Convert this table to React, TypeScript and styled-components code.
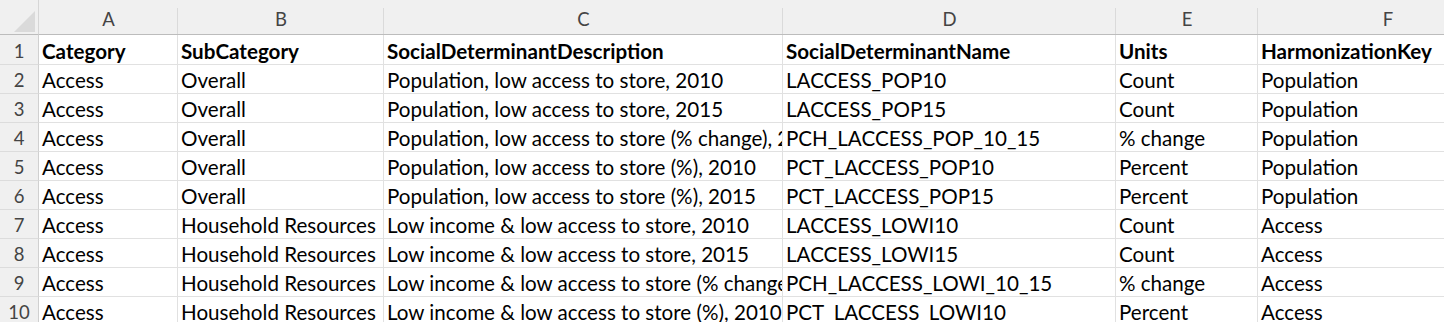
import React from "react";
import styled, { createGlobalStyle } from "styled-components";

const GlobalStyle = createGlobalStyle`
  html, body {
    margin: 0;
    padding: 0;
    background: #ffffff;
    overflow: hidden;
  }
  body {
    font-family: Lato, "Open Sans", sans-serif;
  }
`;

const COLUMNS = [
  { letter: "A", width: 139 },
  { letter: "B", width: 206 },
  { letter: "C", width: 399 },
  { letter: "D", width: 333 },
  { letter: "E", width: 142 },
  { letter: "F", width: 260 },
];

const ROWS: string[][] = [
  [
    "Category",
    "SubCategory",
    "SocialDeterminantDescription",
    "SocialDeterminantName",
    "Units",
    "HarmonizationKey",
  ],
  ["Access", "Overall", "Population, low access to store, 2010", "LACCESS_POP10", "Count", "Population"],
  ["Access", "Overall", "Population, low access to store, 2015", "LACCESS_POP15", "Count", "Population"],
  [
    "Access",
    "Overall",
    "Population, low access to store (% change), 2010-15",
    "PCH_LACCESS_POP_10_15",
    "% change",
    "Population",
  ],
  ["Access", "Overall", "Population, low access to store (%), 2010", "PCT_LACCESS_POP10", "Percent", "Population"],
  ["Access", "Overall", "Population, low access to store (%), 2015", "PCT_LACCESS_POP15", "Percent", "Population"],
  ["Access", "Household Resources", "Low income & low access to store, 2010", "LACCESS_LOWI10", "Count", "Access"],
  ["Access", "Household Resources", "Low income & low access to store, 2015", "LACCESS_LOWI15", "Count", "Access"],
  [
    "Access",
    "Household Resources",
    "Low income & low access to store (% change), 2010-15",
    "PCH_LACCESS_LOWI_10_15",
    "% change",
    "Access",
  ],
  ["Access", "Household Resources", "Low income & low access to store (%), 2010", "PCT_LACCESS_LOWI10", "Percent", "Access"],
];

const Sheet = styled.div<{ $cols: string }>`
  display: grid;
  grid-template-columns: 39px ${(p) => p.$cols};
  grid-template-rows: 35px 30px;
  grid-auto-rows: 29px;
  width: 1444px;
  height: 322px;
  overflow: hidden;
`;

const Corner = styled.div`
  position: relative;
  background: #f0f0f0;
  border-right: 1px solid #d6d6d6;
  border-bottom: 1px solid #bcbcbc;

  &::before {
    content: "";
    position: absolute;
    left: 14px;
    top: 11px;
    width: 0;
    height: 0;
    border-left: 21px solid transparent;
    border-bottom: 21px solid #dadada;
  }

  &::after {
    content: "";
    position: absolute;
    left: 39px;
    top: 7px;
    width: 1px;
    height: 1px;
    background: #222;
  }
`;

const ColHead = styled.div`
  position: relative;
  background: #f0f0f0;
  border-bottom: 1px solid #bcbcbc;
  display: flex;
  align-items: flex-end;
  justify-content: center;
  padding-bottom: 4px;
  box-sizing: border-box;
  font-size: 18.5px;
  color: #444444;

  &::after {
    content: "";
    position: absolute;
    right: 0;
    top: 8px;
    bottom: 0;
    width: 1px;
    background: #dadada;
  }
`;

const RowHead = styled.div`
  background: #f0f0f0;
  border-right: 1px solid #d0d0d0;
  border-bottom: 1px solid #dcdcdc;
  display: flex;
  align-items: center;
  justify-content: center;
  font-size: 18.5px;
  color: #444444;
  padding-top: 2px;
  box-sizing: border-box;
`;

const Cell = styled.div<{ $bold?: boolean }>`
  border-right: 1px solid #e1e1e1;
  border-bottom: 1px solid #e1e1e1;
  display: flex;
  align-items: center;
  padding: 2px 0 0 3px;
  box-sizing: border-box;
  font-size: 20.6px;
  font-weight: ${(p) => (p.$bold ? 700 : 400)};
  color: #000000;
  white-space: nowrap;
  overflow: hidden;
`;

export default function App() {
  return (
    <>
      <GlobalStyle />
      <Sheet $cols={COLUMNS.map((c) => `${c.width}px`).join(" ")}>
        <Corner />
        {COLUMNS.map((c) => (
          <ColHead key={c.letter}>{c.letter}</ColHead>
        ))}
        {ROWS.map((row, r) => (
          <React.Fragment key={r}>
            <RowHead>{r + 1}</RowHead>
            {row.map((value, c) => (
              <Cell key={c} $bold={r === 0}>
                {value}
              </Cell>
            ))}
          </React.Fragment>
        ))}
      </Sheet>
    </>
  );
}
